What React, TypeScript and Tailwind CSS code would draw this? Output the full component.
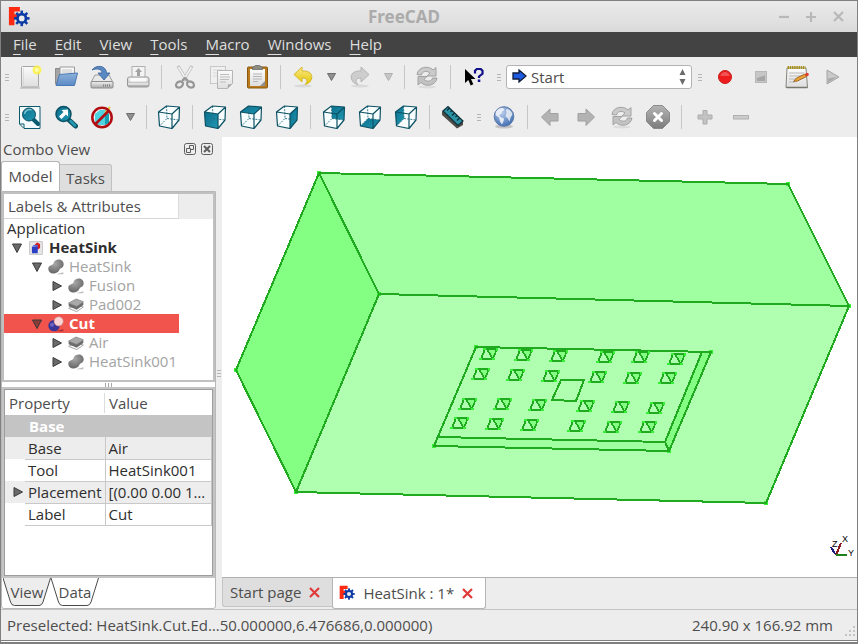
import React from "react";

type Kids = { children?: React.ReactNode };

const Svg = ({ size = 24, children }: Kids & { size?: number }) => (
  <svg width={size} height={size} viewBox="0 0 24 24" fill="none" aria-hidden="true" className="shrink-0">
    {children}
  </svg>
);

const Gradients = () => (
  <svg width="0" height="0" className="absolute" aria-hidden="true">
    <defs>
      <linearGradient id="paper" x1="0" y1="0" x2="0" y2="1">
        <stop offset="0" stopColor="#fbfbfb" />
        <stop offset="1" stopColor="#dedede" />
      </linearGradient>
      <linearGradient id="metal" x1="0" y1="0" x2="0" y2="1">
        <stop offset="0" stopColor="#f2f2f2" />
        <stop offset="1" stopColor="#a9a9a9" />
      </linearGradient>
      <linearGradient id="folder" x1="0" y1="0" x2="0" y2="1">
        <stop offset="0" stopColor="#8fb2da" />
        <stop offset="1" stopColor="#5b8ac6" />
      </linearGradient>
      <linearGradient id="teal" x1="0" y1="0" x2="1" y2="1">
        <stop offset="0" stopColor="#0a6f8c" />
        <stop offset="1" stopColor="#2197b3" />
      </linearGradient>
      <linearGradient id="gold" x1="0" y1="0" x2="0" y2="1">
        <stop offset="0" stopColor="#fbe98a" />
        <stop offset="1" stopColor="#e3c500" />
      </linearGradient>
      <linearGradient id="stop" x1="0" y1="0" x2="0" y2="1">
        <stop offset="0" stopColor="#b4b4b4" />
        <stop offset="1" stopColor="#7c7c7c" />
      </linearGradient>
      <radialGradient id="globe" cx="0.4" cy="0.3" r="0.7">
        <stop offset="0" stopColor="#b9cdea" />
        <stop offset="1" stopColor="#4571b4" />
      </radialGradient>
      <radialGradient id="blob" cx="0.4" cy="0.3" r="0.7">
        <stop offset="0" stopColor="#a8a8a8" />
        <stop offset="1" stopColor="#666666" />
      </radialGradient>
    </defs>
  </svg>
);

const gearTeeth = [0, 45, 90, 135, 180, 225, 270, 315];
const Logo = ({ size = 22 }: { size?: number }) => (
  <Svg size={size}>
    <path d="M1 1H13V6H7V9H11V14H7V21H1Z" fill="#ff2a12" />
    <g fill="#0c3ba5">
      {gearTeeth.map((a) => (
        <rect key={a} x="13.6" y="5" width="2.8" height="5" transform={`rotate(${a} 15 13.5)`} />
      ))}
    </g>
    <circle cx="15" cy="13.5" r="4.6" stroke="#0c3ba5" strokeWidth="3" fill="#ededed" />
  </Svg>
);

const NewDoc = () => (
  <Svg>
    <path d="M2 23h20" stroke="#c2c2c2" strokeWidth="1.5" />
    <rect x="3.500" y="1.500" width="17" height="20.500" rx="1" fill="url(#paper)" stroke="#a8a8a8" />
    <path d="M5.500 3v17" stroke="#cfcfcf" strokeWidth="0.600" />
    <circle cx="19" cy="5" r="4.500" fill="#fbf23a" opacity="0.800" />
    <circle cx="19" cy="5" r="2" fill="#fffdb0" />
  </Svg>
);

const OpenFolder = () => (
  <Svg>
    <path d="M1.500 19V3.500h7l1 2V19z" fill="#a3a3a3" stroke="#8a8a8a" />
    <path d="M6 15V2h14.500v13z" fill="url(#paper)" stroke="#9a9a9a" />
    <path d="M8 5h10M8 7h10" stroke="#cccccc" />
    <path d="M5.500 9.500L23.500 8 20.500 20.500H2z" fill="url(#folder)" stroke="#4a78b5" />
  </Svg>
);

const Save = () => (
  <Svg>
    <path d="M5 10h14l4 7.500H1z" fill="#e9e9e9" stroke="#9c9c9c" />
    <rect x="1" y="16.500" width="22" height="6.500" rx="1" fill="url(#metal)" stroke="#8d8d8d" />
    <path d="M13 20.500h8" stroke="#7c7c7c" strokeDasharray="1 1" strokeWidth="2" />
    <path d="M2 5C6-0.500 16 0 16.500 8H20l-6 7-6-7h4C12 4 7 3 2 5z" fill="#5b89c4" stroke="#365f9a" strokeWidth="0.800" />
  </Svg>
);

const Print = () => (
  <Svg>
    <rect x="6" y="1.500" width="13" height="13" fill="#f3f3f3" stroke="#b0b0b0" />
    <path d="M12.500 3l3.500 4h-2v4h-3V7H9z" fill="#a2a2a2" />
    <rect x="1.500" y="12" width="21.500" height="10" rx="2" fill="url(#metal)" stroke="#989898" />
    <rect x="4" y="13" width="16.500" height="3.500" rx="1" fill="#fafafa" />
    <path d="M2 19h20.500" stroke="#ffffff" />
  </Svg>
);

const Scissors = () => (
  <Svg>
    <path d="M5 1l9 15M19 1l-9 15" stroke="#bdbdbd" strokeWidth="3.200" />
    <path d="M5.500 2l8 13M18.500 2l-8 13" stroke="#f2f2f2" strokeWidth="1.600" />
    <ellipse cx="6.500" cy="19.500" rx="3.700" ry="2.800" stroke="#969696" strokeWidth="2.200" transform="rotate(-30 6.500 19.500)" />
    <ellipse cx="17.500" cy="19.500" rx="3.700" ry="2.800" stroke="#969696" strokeWidth="2.200" transform="rotate(30 17.500 19.500)" />
    <path d="M9 16l3-3 3 3" stroke="#969696" strokeWidth="2" />
  </Svg>
);

const Copy = () => (
  <Svg>
    <rect x="1.500" y="1.500" width="15" height="17" fill="#f0f0f0" stroke="#c8c8c8" />
    <path d="M4 5h9M4 8h9M4 11h9" stroke="#d8d8d8" />
    <path d="M8.500 5.500h15v13l-5 5h-10z" fill="url(#paper)" stroke="#b5b5b5" />
    <path d="M11 9.500h9M11 12h10M11 14.500h9M11 17h6" stroke="#bdbdbd" />
    <path d="M23 19l-4.500 4.500.500-4z" fill="#a8a8a8" />
  </Svg>
);

const Paste = () => (
  <Svg>
    <rect x="2.500" y="2" width="20" height="21" rx="1" fill="#b97a1c" stroke="#8a5a12" />
    <path d="M5 4h15v17H5z" fill="url(#paper)" />
    <path d="M8 9h9M8 11.500h9M8 14h9M8 16.500h5" stroke="#b5b5b5" />
    <path d="M20 16l-5 5h5z" fill="#8f8f8f" />
    <path d="M7.500 4.500V2.500l3-2h4l3 2v2z" fill="#8c8c84" stroke="#5e5e58" strokeWidth="0.700" />
  </Svg>
);

const CurveArrow = ({ fill, stroke, flip }: { fill: string; stroke: string; flip?: boolean }) => (
  <Svg>
    <g transform={flip ? "translate(24 0) scale(-1 1)" : undefined}>
      <ellipse cx="12" cy="21" rx="9" ry="1.500" fill="#d9d9d9" />
      <path d="M3 9.500L11 2v4c7-.500 11 3 9.500 8-1 3.500-4 5-6.500 5.500 3-3 3-6.500-3-6.500v4z" fill={fill} stroke={stroke} strokeLinejoin="round" />
    </g>
  </Svg>
);

const Refresh = () => (
  <Svg>
    <ellipse cx="12" cy="22" rx="9" ry="1.500" fill="#dcdcdc" />
    <path d="M2 9.500C3 2 13 0 18 5l3-2.500V11h-9l3-3C11.500 5 7 6.500 6.500 10z" fill="#cbcbcb" stroke="#a2a2a2" strokeLinejoin="round" />
    <path d="M22 13c-1 7.500-11 9.500-16 4.500L3 20v-8.500h9l-3 3c3.500 3 8 1.500 8.500-1.500z" fill="#c2c2c2" stroke="#a2a2a2" strokeLinejoin="round" />
  </Svg>
);

const WhatsThis = () => (
  <Svg>
    <path d="M4 4v14l3.300-3 2.400 5.500 2.600-1.200L10 14h4.500z" fill="#000000" />
    <path d="M14 8.500V5.800L15.800 4h3.900l1.800 1.800v3L18 11.500V13" stroke="#10108a" strokeWidth="2.200" />
    <path d="M16.800 14.500h2.500v2.500h-2.500z" fill="#10108a" />
  </Svg>
);

const Record = () => (
  <Svg>
    <circle cx="12" cy="12" r="6.500" fill="#ee1c1c" stroke="#c91b1b" />
    <path d="M7.500 11a4.500 4 0 0 1 9 0z" fill="#f56a6a" opacity="0.700" />
  </Svg>
);

const StopSquare = () => (
  <Svg>
    <rect x="6.500" y="6.500" width="11" height="11" fill="#c6c6c6" stroke="#b8b8b8" />
    <path d="M8 16V13l8-2.500V16z" fill="#a6a6a6" />
  </Svg>
);

const Notepad = () => (
  <Svg>
    <path d="M2 3h19l1.500 19.500H1z" fill="url(#paper)" stroke="#85857d" />
    <path d="M1.500 22.500h21" stroke="#77776f" strokeWidth="1.500" />
    <path d="M4 8h15M4 11h15M4 14h9M4 17h6" stroke="#b9b9b9" />
    <path d="M2.500 2.500h18" stroke="#a8921a" strokeWidth="3" strokeDasharray="1.500 0.700" />
    <path d="M8.500 16.500l3-3.500L20 9l1.500 2.500-9 4.500z" fill="#eda136" stroke="#8a5615" strokeWidth="0.800" />
    <circle cx="22" cy="9.500" r="1.800" fill="#e33d2e" />
  </Svg>
);

const Play = () => (
  <Svg>
    <path d="M6 5l12 7-12 7z" fill="#c9c9c9" stroke="#a6a6a6" />
    <path d="M7 13.500L16 12l-9 5.500z" fill="#a9a9a9" />
  </Svg>
);

const FitAll = () => (
  <Svg>
    <path d="M1.500 1.500h20.500V23.500H6L1.500 19z" fill="#f4fbfc" stroke="#0d5a6d" />
    <path d="M2 19h4v4" stroke="#0d5a6d" />
    <path d="M15 14l5 5" stroke="#0b5c70" strokeWidth="4" strokeLinecap="round" />
    <circle cx="11" cy="9.500" r="6.500" fill="url(#teal)" stroke="#0a4f62" />
    <path d="M6.500 9a5 5 0 0 1 7-4" stroke="#7cc4d4" strokeWidth="1.500" />
  </Svg>
);

const FitSelection = () => (
  <Svg>
    <path d="M15 15l6.500 6" stroke="#0b5566" strokeWidth="5" strokeLinecap="round" />
    <path d="M16.500 16l4.500 4.500" stroke="#2598b2" strokeWidth="2.500" strokeLinecap="round" />
    <circle cx="9.500" cy="9" r="7.500" fill="url(#teal)" stroke="#0a4f62" strokeWidth="1.500" />
    <path d="M14 4.500v7l-2-2-4.500 4.500-2.500-2.500L9.500 7 7.500 5z" fill="#ffffff" />
  </Svg>
);

const DrawStyle = () => (
  <Svg>
    <path d="M5 9l5-4h9v11l-4 4H5z" fill="#4ed3e2" />
    <path d="M15 9h4v9l-4 2z" fill="#159fb2" />
    <path d="M15 8l5-6" stroke="#e8cd3a" strokeWidth="2" />
    <circle cx="12" cy="12.500" r="9.700" stroke="#b00d12" strokeWidth="2.500" />
    <path d="M5 19.500L19 5.500" stroke="#b00d12" strokeWidth="2.500" />
  </Svg>
);

type Face = "front" | "top" | "right" | "rear" | "bottom" | "left";
const faces: Record<Face, string> = {
  front: "M1.500 7L15 9v14.500L2.500 21z",
  top: "M1.500 7L9.500 1l13 1L15 9z",
  right: "M15 9l7.500-7L22 15l-7 8.500z",
  rear: "M9.500 1l13 1L22 15 10 13.500z",
  bottom: "M2.500 21l7.500-7.500L22 15l-7 8.500z",
  left: "M1.500 7L9.500 1l.500 12.500-7.500 7.500z",
};
const Cube = ({ face }: { face?: Face }) => (
  <Svg>
    <path d="M1.500 7L9.500 1l13 1L22 15l-7 8.500L2.500 21z" fill="#f8fdfe" />
    {face && <path d={faces[face]} fill="url(#teal)" />}
    <path d="M9.500 1l.500 12.500L2.500 21M10 13.500L22 15" stroke="#2b7282" strokeWidth="0.900" strokeDasharray="2 1.200" />
    <path d="M1.500 7L9.500 1l13 1L22 15l-7 8.500L2.500 21zM1.500 7L15 9l7.500-7M15 9v14.500" stroke="#0d5264" strokeWidth="1.200" strokeLinejoin="round" />
  </Svg>
);

const Ruler = () => (
  <Svg>
    <path d="M1 6v4l15 13.500 6-3.500v-4z" fill="#4c4c48" />
    <path d="M2 6l5-4.500L22 16l-5 4.500z" fill="#2b93a6" stroke="#10313a" strokeWidth="1.200" />
    <path d="M8.500 3L6 5.500M11 5.500L9.500 7M13.500 8L11 10.500M16 10.500L14.500 12M18.500 13L16 15.500" stroke="#0c2a30" strokeWidth="1.200" />
  </Svg>
);

const Globe = () => (
  <Svg>
    <ellipse cx="12" cy="21.500" rx="9" ry="2" fill="#c4c4c4" />
    <circle cx="12" cy="11.500" r="9.800" fill="url(#globe)" stroke="#5b78a8" />
    <path d="M4 6.500C6 3.500 9 2.500 11 3l1.500 2-2.500 1.500L9 9l-2 1 2 2.500 2.500.500.500 2-2 4.500-2-3-1-4-3.500-2.500z" fill="#f1f4f8" opacity="0.900" />
    <path d="M14 4.500c3-1.500 6 2 6.500 5l-2 3-1 4-2-3.500-2-1.500 1-3.500z" fill="#f1f4f8" opacity="0.800" />
  </Svg>
);

const BlockArrow = ({ right }: { right?: boolean }) => (
  <Svg>
    <path
      transform={right ? "translate(24 0) scale(-1 1)" : undefined}
      d="M3.500 12L12 4v4.500h8v7.500h-8v4.500z"
      fill="#b3b3b3"
      stroke="#a0a0a0"
      strokeLinejoin="round"
    />
  </Svg>
);

const StopLoad = () => (
  <Svg>
    <path d="M7.500.500h9l7 7v9l-7 7h-9l-7-7v-9z" fill="url(#stop)" stroke="#8b8b8b" />
    <path d="M8.500 8.500l7 7M15.500 8.500l-7 7" stroke="#ffffff" strokeWidth="3" strokeLinecap="round" />
  </Svg>
);

const Plus = () => (
  <Svg>
    <path d="M10 5.500h4V10h5v4h-5v5h-4v-5H5v-4h5z" fill="#c3c3c3" stroke="#acacac" />
  </Svg>
);
const Minus = () => (
  <Svg>
    <rect x="4.500" y="10.500" width="15" height="3.500" fill="#cccccc" stroke="#b0b0b0" />
  </Svg>
);

const Grip = ({ wide }: { wide?: boolean }) => (
  <div className={`flex shrink-0 flex-col items-center gap-[2px] ${wide ? "w-[15px]" : "w-[11px]"}`}>
    <i className="h-px w-1 bg-[#b5b5b5]" />
    <i className="h-px w-1 bg-[#b5b5b5]" />
    <i className="h-px w-1 bg-[#b5b5b5]" />
  </div>
);

const Tool = ({ label, children }: Kids & { label: string }) => (
  <button type="button" aria-label={label} className="flex h-9 w-9 shrink-0 items-center justify-center">
    {children}
  </button>
);

const Drop = ({ label, faded }: { label: string; faded?: boolean }) => (
  <button type="button" aria-label={label} className="flex h-9 w-[21px] shrink-0 items-center justify-center">
    <svg width="9" height="8" viewBox="0 0 9 8" aria-hidden="true">
      <path d="M.500.500h8L4.500 7.500z" fill={faded ? "#c6c6c6" : "#909090"} stroke={faded ? "#b0b0b0" : "#6c6c6c"} />
    </svg>
  </button>
);

const Sep = ({ wide }: { wide?: boolean }) => (
  <div className={`flex shrink-0 justify-center ${wide ? "w-[11px]" : "w-[10px]"}`}>
    <i className="h-6 w-px bg-[#c6c6c6]" />
  </div>
);

const Arrow = ({ open, tone = "#6a6a6a" }: { open?: boolean; tone?: string }) => (
  <svg width="10" height="10" viewBox="0 0 10 10" aria-hidden="true" className="shrink-0">
    <path d={open ? "M.500 1h9L5 9.500z" : "M1 .500v9L9.500 5z"} fill={tone} stroke="#3a3a3a" strokeLinejoin="round" />
  </svg>
);

const DocIcon = () => (
  <Svg size={14}>
    <path d="M1 1h22v22H1z" fill="#e6e6e6" stroke="#c2c2c2" strokeWidth="1.500" />
    <path d="M10 6l4-3.500 5 2.500v7l-5 3z" fill="#d61d1d" />
    <path d="M5 10h10v11H5z" fill="#2b3fc4" />
    <path d="M5 10l3-3h7v3z" fill="#5266dd" />
  </Svg>
);
const FusionIcon = () => (
  <Svg size={16}>
    <path d="M12 23h11v-3z" fill="#bdbdbd" />
    <path d="M8 7c2-8.500 15.500-8.500 15.500 1 0 6-5 5-6.500 8.500-3 7.500-16.500 7-16.500-2C.500 9 6 10 8 7z" fill="url(#blob)" />
  </Svg>
);
const PadIcon = () => (
  <Svg size={16}>
    <path d="M1 17l12 5 10-7-10-3z" fill="#ffffff" stroke="#a5a5a5" strokeWidth="1.500" />
    <path d="M1 9v5l12 5 10-7V7L13 14z" fill="#6d6d6d" />
    <path d="M1 9l11-6 11 4-10 7z" fill="#a9a9a9" stroke="#7d7d7d" />
  </Svg>
);
const CutIcon = () => (
  <Svg size={16}>
    <path d="M10 23h13v-3z" fill="#a52c30" />
    <circle cx="9" cy="14.500" r="8.500" fill="#3a3596" />
    <circle cx="6" cy="13" r="3" fill="#6d66c4" />
    <circle cx="16" cy="8" r="7" fill="#fcd3d3" stroke="#c97a80" />
  </Svg>
);

type Node = { text: string; level: number; open?: boolean; icon: React.ReactNode; look?: "bold" | "selected" };
const nodes: Node[] = [
  { text: "HeatSink", level: 1, open: true, icon: <DocIcon />, look: "bold" },
  { text: "HeatSink", level: 2, open: true, icon: <FusionIcon /> },
  { text: "Fusion", level: 3, icon: <FusionIcon /> },
  { text: "Pad002", level: 3, icon: <PadIcon /> },
  { text: "Cut", level: 2, open: true, icon: <CutIcon />, look: "selected" },
  { text: "Air", level: 3, icon: <PadIcon /> },
  { text: "HeatSink001", level: 3, icon: <FusionIcon /> },
];
const indent = ["", "pl-2", "pl-7", "pl-12"];
const looks = { bold: "font-bold text-[#2e2e2e]", selected: "bg-[#f0544c] font-bold text-white" };

const Tree = () => (
  <div className="border-2 border-[#c0c0c0] bg-white">
    <div className="flex h-[25px] border-b border-[#d6d6d6] bg-white">
      <div className="flex w-[175px] shrink-0 items-center border-r border-[#dcdcdc] pl-1 text-[#4d4d4d]">Labels &amp; Attributes</div>
      <div className="-mb-px flex-1 bg-[#ededed]" />
    </div>
    <div role="tree" aria-label="Model tree" className="h-[161px] leading-[19px]">
      <div role="treeitem" className="h-[19px] pl-[3px] text-[#2e2e2e]">
        Application
      </div>
      {nodes.map((n, i) => (
        <div
          key={i}
          role="treeitem"
          aria-level={n.level}
          className={`flex h-[19px] w-[175px] items-center ${indent[n.level]} ${n.look ? looks[n.look] : "text-[#a3a3a3]"}`}
        >
          <Arrow open={n.open} tone={n.look === "selected" ? "#8a3b36" : undefined} />
          <span className="flex w-[27px] shrink-0 justify-center">{n.icon}</span>
          <span>{n.text}</span>
        </div>
      ))}
    </div>
  </div>
);

const props = [
  { name: "Base", value: "Air", shade: true },
  { name: "Tool", value: "HeatSink001" },
  { name: "Placement", value: "[(0.00 0.00 1…", shade: true, expand: true },
  { name: "Label", value: "Cut" },
];

const Properties = () => (
  <div className="flex min-h-0 flex-1 flex-col border-2 border-[#c4c4c4]">
    <div className="flex-1 border border-[#9d9d9d] bg-white">
      <table className="w-full table-fixed border-collapse text-left leading-5 text-[#2e2e2e]">
        <colgroup>
          <col className="w-[20px]" />
          <col className="w-[80px]" />
          <col />
        </colgroup>
        <thead className="text-[#4d4d4d]">
          <tr className="h-[25px]">
            <th colSpan={2} className="p-0 pl-1 font-normal">
              <div className="border-r border-[#dcdcdc]">Property</div>
            </th>
            <th className="p-0 pl-1 font-normal">Value</th>
          </tr>
        </thead>
        <tbody>
          <tr className="h-[22px] bg-[#c4c4c4] text-white">
            <th className="p-0" />
            <th colSpan={2} className="p-0 pl-1">
              Base
            </th>
          </tr>
          {props.map((p) => (
            <tr key={p.name} className={`h-[22px] ${p.shade ? "bg-[#ededed]" : ""}`}>
              <td className="p-0 pl-2">{p.expand && <Arrow />}</td>
              <td className="border-r border-b border-[#c8c8c8] p-0 pl-[3px]">{p.name}</td>
              <td className="border-r border-b border-[#c8c8c8] p-0 pl-[3px] whitespace-nowrap">{p.value}</td>
            </tr>
          ))}
        </tbody>
      </table>
    </div>
  </div>
);

const FootTab = ({ children, active }: Kids & { active?: boolean }) => (
  <button type="button" role="tab" aria-selected={!!active} className="relative h-[29px] w-12">
    <svg viewBox="0 0 48 29" className="absolute inset-0 h-full w-full" aria-hidden="true">
      <path d="M0 0L7.500 24q1 3.500 4 3.500H36q3 0 4-3.500L47.500 0" fill={active ? "#ffffff" : "#ededed"} stroke="#4a4a4a" />
    </svg>
    <span className="relative">{children}</span>
  </button>
);

const pins: [number, number][] = [
  [481, 359], [516, 360], [551, 361], [598, 362], [633, 362], [669, 364],
  [473, 379], [508, 380], [543, 381], [590, 382], [625, 383], [660, 383],
  [460, 409], [495, 409], [530, 410], [578, 411], [613, 412], [648, 413],
  [452, 428], [487, 429], [522, 430], [569, 431], [605, 432], [640, 432],
];
const corners: [number, number][] = [
  [319, 173], [788, 184], [849, 306], [379, 294], [236, 370], [296, 492], [766, 503],
  [476, 347], [711, 352], [669, 451], [434, 446],
];

const Viewport = () => (
  <svg viewBox="222 137 635 440" className="block h-full w-full" role="img" aria-label="3D view" shapeRendering="crispEdges">
    <path d="M319 173L788 184 849 306 379 294z" fill="#a0ffa0" />
    <path d="M319 173L379 294 296 492 236 370z" fill="#84ff84" />
    <path d="M379 294L849 306 766 503 296 492z" fill="#b0ffb0" />
    <path d="M438 437L665 442 669 451 434 446z" fill="#a0ffa0" />
    <path d="M702 352h9L669 451l-4-9z" fill="#84ff84" />
    {corners.map(([x, y]) => (
      <rect key={`${x}-${y}`} x={x - 2} y={y - 2} width="4" height="4" fill="#35f035" />
    ))}
    <g stroke="#1faa1f" strokeWidth="2" fill="none">
      <path d="M319 173L788 184 849 306 766 503 296 492 236 370zL379 294 849 306M379 294L296 492" />
      <path d="M476 347L711 352 669 451 434 446z" />
      <path d="M438 437L665 442 702 352M665 442l4 9" />
      <path d="M561 380h23l-8 21-24-1z" />
    </g>
    {pins.map(([x, y]) => (
      <g key={`${x}-${y}`} transform={`translate(${x} ${y})`}>
        <path d="M5-10h11l-4 10z" fill="#84ff84" />
        <path d="M0 0L4-10h12L12 0zM6-10l6 10" fill="none" stroke="#1faa1f" strokeWidth="1.700" />
        <path d="M-2-1h3v2h-3zM2-11h3v2h-3zM15-11h2v3h-2zM11-1h3v2h-3z" fill="#35f035" />
      </g>
    ))}
    <g strokeWidth="2" fill="none">
      <path d="M831 547l4 7" stroke="#1c1c80" />
      <path d="M841 543l-5 12" stroke="#8c1c1c" />
      <path d="M836 555h11" stroke="#1c801c" />
    </g>
    <g className="font-['Liberation_Sans',sans-serif] text-[9px]" fill="#000000">
      <text x="842" y="542">X</text>
      <text x="832" y="547">Z</text>
      <text x="848" y="556">Y</text>
    </g>
  </svg>
);

const CloseX = () => (
  <svg width="11" height="11" viewBox="0 0 11 11" aria-hidden="true">
    <path d="M1 1l9 9M10 1l-9 9" stroke="#e03a3a" strokeWidth="2.200" />
  </svg>
);

const menus = ["File", "Edit", "View", "Tools", "Macro", "Windows", "Help"];

export default function App() {
  return (
    <div className="flex h-screen flex-col border border-b-2 border-[#808080] bg-[#ededed] font-['Open_Sans','Noto_Sans',sans-serif] text-[15px] text-[#4d4d4d]">
      <Gradients />
      <header className="flex h-[31px] shrink-0 items-center bg-linear-to-b from-[#ebebeb] to-[#dadada] pr-3 pl-[7px]">
        <Logo />
        <h1 className="flex-1 text-center font-['Noto_Sans',sans-serif] text-[17px] font-bold text-[#ababab]">FreeCAD</h1>
        <div className="flex gap-[14px] text-[#b8b8b8]">
          {[
            ["Minimize", "M1 7h10"],
            ["Maximize", "M1 7h10M6 2v10"],
            ["Close", "M2 2l9 9M11 2l-9 9"],
          ].map(([name, d]) => (
            <button key={name} type="button" aria-label={name}>
              <svg width="13" height="14" viewBox="0 0 13 14" className="block">
                <path d={d} stroke="currentColor" strokeWidth="2.200" />
              </svg>
            </button>
          ))}
        </div>
      </header>

      <nav className="flex h-[25px] shrink-0 items-center bg-[#434343] pl-[3px] text-[#dedede]">
        {menus.map((m) => (
          <button key={m} type="button" className="px-[9px]">
            <span className="underline underline-offset-4">{m[0]}</span>
            {m.slice(1)}
          </button>
        ))}
      </nav>

      <div className="flex h-10 shrink-0 items-center">
        <Grip />
        <Tool label="New"><NewDoc /></Tool>
        <Tool label="Open"><OpenFolder /></Tool>
        <Tool label="Save"><Save /></Tool>
        <Tool label="Print"><Print /></Tool>
        <Sep wide />
        <Tool label="Cut"><Scissors /></Tool>
        <Tool label="Copy"><Copy /></Tool>
        <Tool label="Paste"><Paste /></Tool>
        <Sep />
        <Tool label="Undo"><CurveArrow fill="url(#gold)" stroke="#d6b82c" /></Tool>
        <Drop label="Undo list" />
        <Tool label="Redo"><CurveArrow fill="#cdcdcd" stroke="#b5b5b5" flip /></Tool>
        <Drop label="Redo list" faded />
        <Sep />
        <Tool label="Refresh"><Refresh /></Tool>
        <Sep />
        <Tool label="What's this?"><WhatsThis /></Tool>
        <Grip wide />
        <div className="relative w-[186px] shrink-0">
          <select aria-label="Workbench" className="block h-6 w-full appearance-none rounded-[3px] border border-[#b3b3b3] bg-white pl-6 leading-5">
            <option>Start</option>
          </select>
          <svg width="15" height="14" viewBox="0 0 15 14" className="absolute top-[4px] left-[6px]" aria-hidden="true">
            <path d="M1 4h6V1l7 6-7 6v-3H1z" fill="#1f5be0" stroke="#101c3c" strokeWidth="1.300" />
          </svg>
          <svg width="7" height="16" viewBox="0 0 7 16" className="absolute top-[4px] right-[6px]" aria-hidden="true">
            <path d="M3.500 0L6.500 6H.500zM3.500 16L6.500 10H.500z" fill="#6b6b6b" />
          </svg>
        </div>
        <Grip wide />
        <Tool label="Record macro"><Record /></Tool>
        <Tool label="Stop macro"><StopSquare /></Tool>
        <Tool label="Macros"><Notepad /></Tool>
        <Tool label="Run macro"><Play /></Tool>
      </div>

      <div className="flex h-10 shrink-0 items-center">
        <Grip />
        <Tool label="Fit all"><FitAll /></Tool>
        <Tool label="Fit selection"><FitSelection /></Tool>
        <Tool label="Draw style"><DrawStyle /></Tool>
        <Drop label="Draw style list" />
        <Sep />
        <Tool label="Axonometric"><Cube /></Tool>
        <Sep />
        <Tool label="Front"><Cube face="front" /></Tool>
        <Tool label="Top"><Cube face="top" /></Tool>
        <Tool label="Right"><Cube face="right" /></Tool>
        <Sep wide />
        <Tool label="Rear"><Cube face="rear" /></Tool>
        <Tool label="Bottom"><Cube face="bottom" /></Tool>
        <Tool label="Left"><Cube face="left" /></Tool>
        <Sep wide />
        <Tool label="Measure"><Ruler /></Tool>
        <Grip wide />
        <Tool label="Open website"><Globe /></Tool>
        <Sep />
        <Tool label="Previous page"><BlockArrow /></Tool>
        <Tool label="Next page"><BlockArrow right /></Tool>
        <Tool label="Reload page"><Refresh /></Tool>
        <Tool label="Stop loading"><StopLoad /></Tool>
        <Sep wide />
        <Tool label="Zoom in"><Plus /></Tool>
        <Tool label="Zoom out"><Minus /></Tool>
      </div>

      <main className="flex min-h-0 flex-1">
        <aside className="flex w-[215px] shrink-0 flex-col">
          <div className="flex h-6 items-center gap-[5px] pr-[3px] pl-[2px]">
            <h2 className="flex-1">Combo View</h2>
            <button type="button" aria-label="Float panel">
              <svg width="12" height="12" viewBox="0 0 12 12" fill="none" stroke="#5e5e5e" className="block">
                <rect x=".5" y=".5" width="11" height="11" rx="2" />
                <path d="M5.500 5V2.500h4v4H7M2.500 5.500h4v4h-4z" />
              </svg>
            </button>
            <button type="button" aria-label="Close panel">
              <svg width="12" height="12" viewBox="0 0 12 12" fill="none" stroke="#5e5e5e" className="block">
                <rect x=".5" y=".5" width="11" height="11" rx="2" />
                <path d="M3 3l6 6M9 3l-6 6" strokeWidth="2" />
              </svg>
            </button>
          </div>
          <div role="tablist" className="flex h-[30px] items-end">
            <button type="button" role="tab" aria-selected="true" className="h-full w-[59px] rounded-t-[3px] border border-b-0 border-[#b5b5b5] bg-white">
              Model
            </button>
            <button type="button" role="tab" aria-selected="false" className="h-[27px] w-[52px] rounded-tr-[3px] border border-b-0 border-l-0 border-[#c0c0c0] bg-[#dedede]">
              Tasks
            </button>
          </div>
          <div className="flex min-h-0 flex-1 flex-col rounded-b-[3px] border border-[#b8b8b8] bg-white">
            <Tree />
            <div className="flex h-[5px] shrink-0 items-center justify-center gap-[2px]">
              <i className="h-1 w-px bg-[#a8a8a8]" />
              <i className="h-1 w-px bg-[#a8a8a8]" />
              <i className="h-1 w-px bg-[#a8a8a8]" />
            </div>
            <Properties />
            <div role="tablist" className="flex h-[30px] shrink-0 pl-px">
              <FootTab>View</FootTab>
              <FootTab active>Data</FootTab>
            </div>
          </div>
        </aside>
        <div className="flex w-[6px] shrink-0 flex-col items-center justify-center gap-[2px]">
          <i className="h-px w-1 bg-[#b5b5b5]" />
          <i className="h-px w-1 bg-[#b5b5b5]" />
          <i className="h-px w-1 bg-[#b5b5b5]" />
        </div>
        <section className="flex min-w-0 flex-1 flex-col">
          <div className="min-h-0 flex-1 bg-white">
            <Viewport />
          </div>
          <div role="tablist" className="flex h-8 shrink-0 items-start border-t border-[#b0b0b0]">
            <div className="flex h-[29px] items-center gap-2 rounded-bl-[3px] border border-t-0 border-r-0 border-[#c4c4c4] bg-[#dedede] pr-3 pl-[7px]">
              <button type="button" role="tab" aria-selected="false">Start page</button>
              <button type="button" aria-label="Close Start page"><CloseX /></button>
            </div>
            <div className="flex h-full items-center rounded-b-[3px] border border-t-0 border-[#b5b5b5] bg-white pr-3 pl-[6px]">
              <button type="button" role="tab" aria-selected="true" className="flex items-center gap-2">
                <Logo size={16} />
                HeatSink : 1*
              </button>
              <button type="button" aria-label="Close HeatSink" className="ml-2"><CloseX /></button>
            </div>
          </div>
        </section>
      </main>

      <footer className="flex h-[31px] shrink-0 items-center border-t border-[#c4c4c4] pl-[6px]">
        <p className="flex-1">Preselected: HeatSink.Cut.Ed…50.000000,6.476686,0.000000)</p>
        <p>240.90 x 166.92 mm</p>
        <svg width="24" height="30" viewBox="0 0 24 30" fill="#c4c4c4" aria-hidden="true">
          <path d="M20 16h2v2h-2zM16 20h2v2h-2zM20 20h2v2h-2zM12 24h2v2h-2zM16 24h2v2h-2zM20 24h2v2h-2z" />
        </svg>
      </footer>
      <div className="h-[2px] shrink-0 border-t border-[#808080] bg-white" />
    </div>
  );
}
